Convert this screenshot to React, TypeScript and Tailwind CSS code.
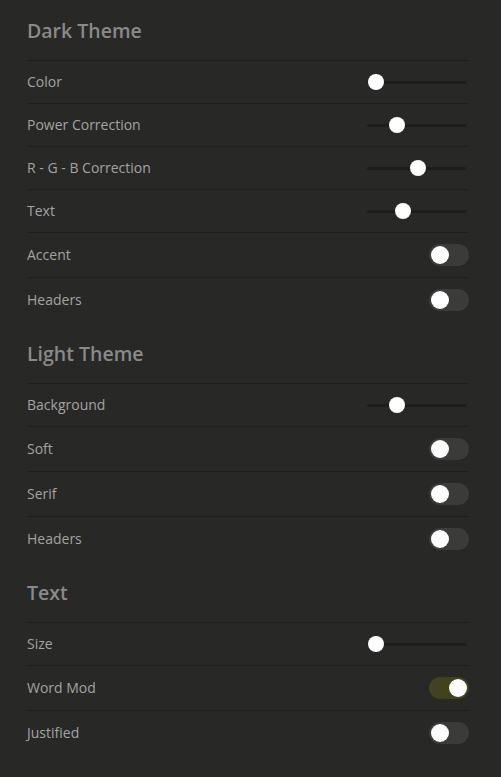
import React from "react";

type Row =
  | { kind: "slider"; label: string; value: number }
  | { kind: "toggle"; label: string; on: boolean };

const sections: { title: string; rows: Row[] }[] = [
  {
    title: "Dark Theme",
    rows: [
      { kind: "slider", label: "Color", value: 0 },
      { kind: "slider", label: "Power Correction", value: 0.25 },
      { kind: "slider", label: "R - G - B Correction", value: 0.5 },
      { kind: "slider", label: "Text", value: 0.33 },
      { kind: "toggle", label: "Accent", on: false },
      { kind: "toggle", label: "Headers", on: false },
    ],
  },
  {
    title: "Light Theme",
    rows: [
      { kind: "slider", label: "Background", value: 0.25 },
      { kind: "toggle", label: "Soft", on: false },
      { kind: "toggle", label: "Serif", on: false },
      { kind: "toggle", label: "Headers", on: false },
    ],
  },
  {
    title: "Text",
    rows: [
      { kind: "slider", label: "Size", value: 0 },
      { kind: "toggle", label: "Word Mod", on: true },
      { kind: "toggle", label: "Justified", on: false },
    ],
  },
];

function Slider({ value }: { value: number }) {
  return (
    <div className="relative w-[99px] h-4 flex items-center mr-[3px]">
      <div className="w-full h-[3px] rounded-full bg-[#1d1d1c]" />
      <div
        className="absolute top-0 w-4 h-4 rounded-full bg-white"
        style={{ left: `${1 + value * 83}px` }}
      />
    </div>
  );
}

function Toggle({ on }: { on: boolean }) {
  return (
    <div
      className={
        "relative w-10 h-[22px] rounded-full flex items-center px-[2px] " +
        (on ? "bg-[#42421f] justify-end" : "bg-[#3b3b3a] justify-start")
      }
    >
      <div className="w-[18px] h-[18px] rounded-full bg-white" />
    </div>
  );
}

export default function App() {
  return (
    <div
      className="min-h-[777px] w-full bg-[#282827] px-[27px] pb-6"
      style={{ fontFamily: '"Open Sans", "Noto Sans", sans-serif' }}
    >
      <div className="w-[442px]">
        {sections.map((s, i) => (
          <div key={i}>
            <div className={"flex items-center pt-[2px] " + (i === 0 ? "h-[60px]" : "h-[61px]")}>
              <h2 className="text-[19.5px] font-semibold text-[#8a8a89]">{s.title}</h2>
            </div>
            {s.rows.map((r, j) => (
              <div
                key={j}
                className={
                  "flex items-center justify-between border-t border-[#1f1f1e] " +
                  (r.kind === "slider" ? "h-[43px]" : "h-[45px]")
                }
              >
                <span className="text-[14px] text-[#a3a3a2] -mt-[2px]">{r.label}</span>
                {r.kind === "slider" ? <Slider value={r.value} /> : <Toggle on={r.on} />}
              </div>
            ))}
          </div>
        ))}
      </div>
    </div>
  );
}
